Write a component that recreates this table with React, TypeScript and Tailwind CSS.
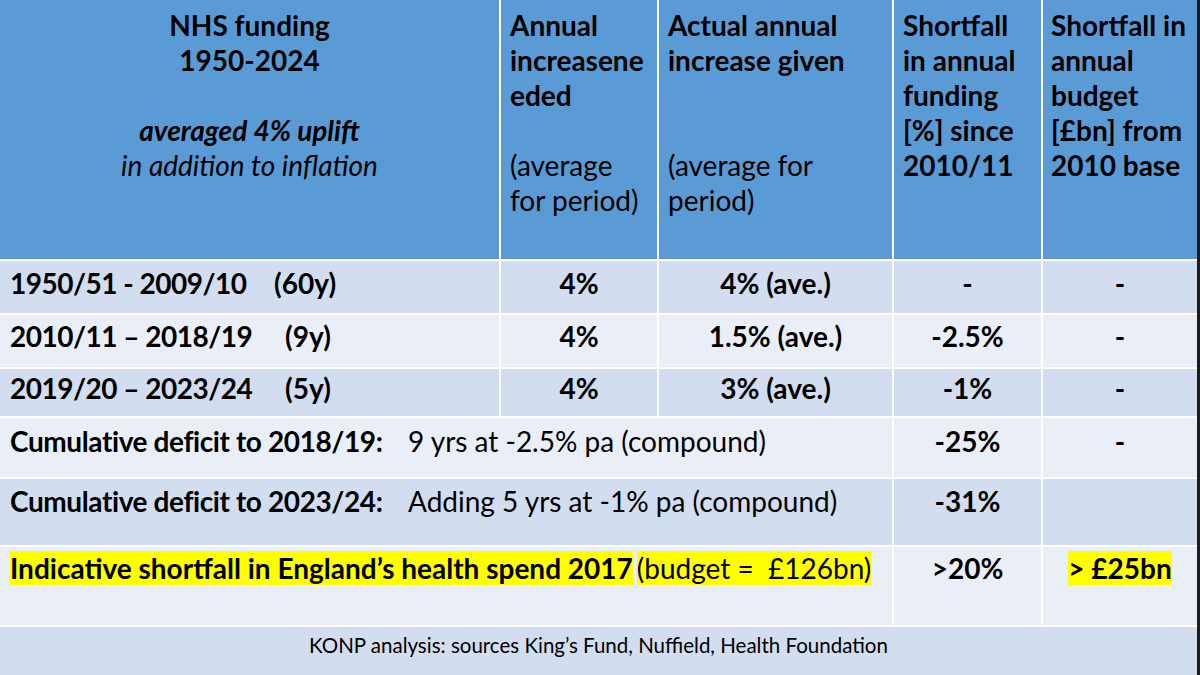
import React from "react";

const dark = "bg-[#d2deef]";
const light = "bg-[#eaeff7]";
const head = "bg-[#5b9bd5]";

export default function App() {
  return (
    <div
      className="w-[1200px] h-[675px] bg-[#1c1c1c] flex text-black"
      style={{ fontFamily: "Lato, 'Open Sans', sans-serif" }}
    >
      <div className="w-[1197px] h-[675px] bg-white grid gap-[2px] grid-cols-[499px_156px_233px_147px_154px] grid-rows-[259px_52px_52px_47px_59px_66px_78px_48px] text-[28px] leading-[35px] whitespace-nowrap">
        {/* Header */}
        <div className={`${head} pt-[8px] text-center`}>
          <div className="font-bold">NHS funding</div>
          <div className="font-bold">1950-2024</div>
          <div>&nbsp;</div>
          <div className="font-bold italic">averaged 4% uplift</div>
          <div className="italic">in addition to inflation</div>
        </div>
        <div className={`${head} pt-[8px] pl-[9px]`}>
          <div className="font-bold">Annual</div>
          <div className="font-bold">increasene</div>
          <div className="font-bold">eded</div>
          <div>&nbsp;</div>
          <div>(average</div>
          <div>for period)</div>
        </div>
        <div className={`${head} pt-[8px] pl-[9px]`}>
          <div className="font-bold">Actual annual</div>
          <div className="font-bold">increase given</div>
          <div>&nbsp;</div>
          <div>&nbsp;</div>
          <div>(average for</div>
          <div>period)</div>
        </div>
        <div className={`${head} pt-[8px] pl-[9px] font-bold`}>
          <div>Shortfall</div>
          <div>in annual</div>
          <div>funding</div>
          <div>[%] since</div>
          <div>2010/11</div>
        </div>
        <div className={`${head} pt-[8px] pl-[8px] font-bold`}>
          <div>Shortfall in</div>
          <div>annual</div>
          <div>budget</div>
          <div>[£bn] from</div>
          <div>2010 base</div>
        </div>

        {/* Row 1 */}
        <div className={`${dark} pt-[5px] pl-[10px] font-bold flex`}>
          <span className="w-[264px] shrink-0 tracking-[-0.5px]">1950/51 - 2009/10</span>
          <span>(60y)</span>
        </div>
        <div className={`${dark} pt-[5px] font-bold text-center`}>4%</div>
        <div className={`${dark} pt-[5px] font-bold text-center`}>4% (ave.)</div>
        <div className={`${dark} pt-[5px] font-bold text-center`}>-</div>
        <div className={`${dark} pt-[5px] font-bold text-center`}>-</div>

        {/* Row 2 */}
        <div className={`${light} pt-[4px] pl-[10px] font-bold flex`}>
          <span className="w-[275px] shrink-0 tracking-[-0.5px]">2010/11 – 2018/19</span>
          <span>(9y)</span>
        </div>
        <div className={`${light} pt-[4px] font-bold text-center`}>4%</div>
        <div className={`${light} pt-[4px] font-bold text-center`}>1.5% (ave.)</div>
        <div className={`${light} pt-[4px] font-bold text-center`}>-2.5%</div>
        <div className={`${light} pt-[4px] font-bold text-center`}>-</div>

        {/* Row 3 */}
        <div className={`${dark} pt-[2px] pl-[10px] font-bold flex`}>
          <span className="w-[275px] shrink-0 tracking-[-0.5px]">2019/20 – 2023/24</span>
          <span>(5y)</span>
        </div>
        <div className={`${dark} pt-[2px] font-bold text-center`}>4%</div>
        <div className={`${dark} pt-[2px] font-bold text-center`}>3% (ave.)</div>
        <div className={`${dark} pt-[2px] font-bold text-center`}>-1%</div>
        <div className={`${dark} pt-[2px] font-bold text-center`}>-</div>

        {/* Row 4 */}
        <div className={`${light} col-span-3 pt-[6px] pl-[10px] flex`}>
          <span className="font-bold w-[398px] shrink-0 tracking-[-0.4px]">Cumulative deficit to 2018/19:</span>
          <span>9 yrs at -2.5% pa (compound)</span>
        </div>
        <div className={`${light} pt-[6px] font-bold text-center`}>-25%</div>
        <div className={`${light} pt-[6px] font-bold text-center`}>-</div>

        {/* Row 5 */}
        <div className={`${dark} col-span-3 pt-[5px] pl-[10px] flex`}>
          <span className="font-bold w-[398px] shrink-0 tracking-[-0.4px]">Cumulative deficit to 2023/24:</span>
          <span>Adding 5 yrs at -1% pa (compound)</span>
        </div>
        <div className={`${dark} pt-[5px] font-bold text-center`}>-31%</div>
        <div className={`${dark}`}></div>

        {/* Row 6 */}
        <div className={`${light} col-span-3 pt-[4px] pl-[10px]`}>
          <span className="font-bold bg-[#ffff00]">Indicative shortfall in England’s health spend 2017</span>
          <span className="ml-[4px] bg-[#ffff00]">(budget =&nbsp; £126bn)</span>
        </div>
        <div className={`${light} pt-[4px] font-bold text-center`}>&gt;20%</div>
        <div className={`${light} pt-[4px] font-bold text-center`}>
          <span className="bg-[#ffff00]">&gt; £25bn</span>
        </div>

        {/* Footer */}
        <div className={`${dark} col-span-5 pt-[6px] text-center text-[20.5px] leading-[24px]`}>
          KONP analysis: sources King’s Fund, Nuffield, Health Foundation
        </div>
      </div>
    </div>
  );
}
